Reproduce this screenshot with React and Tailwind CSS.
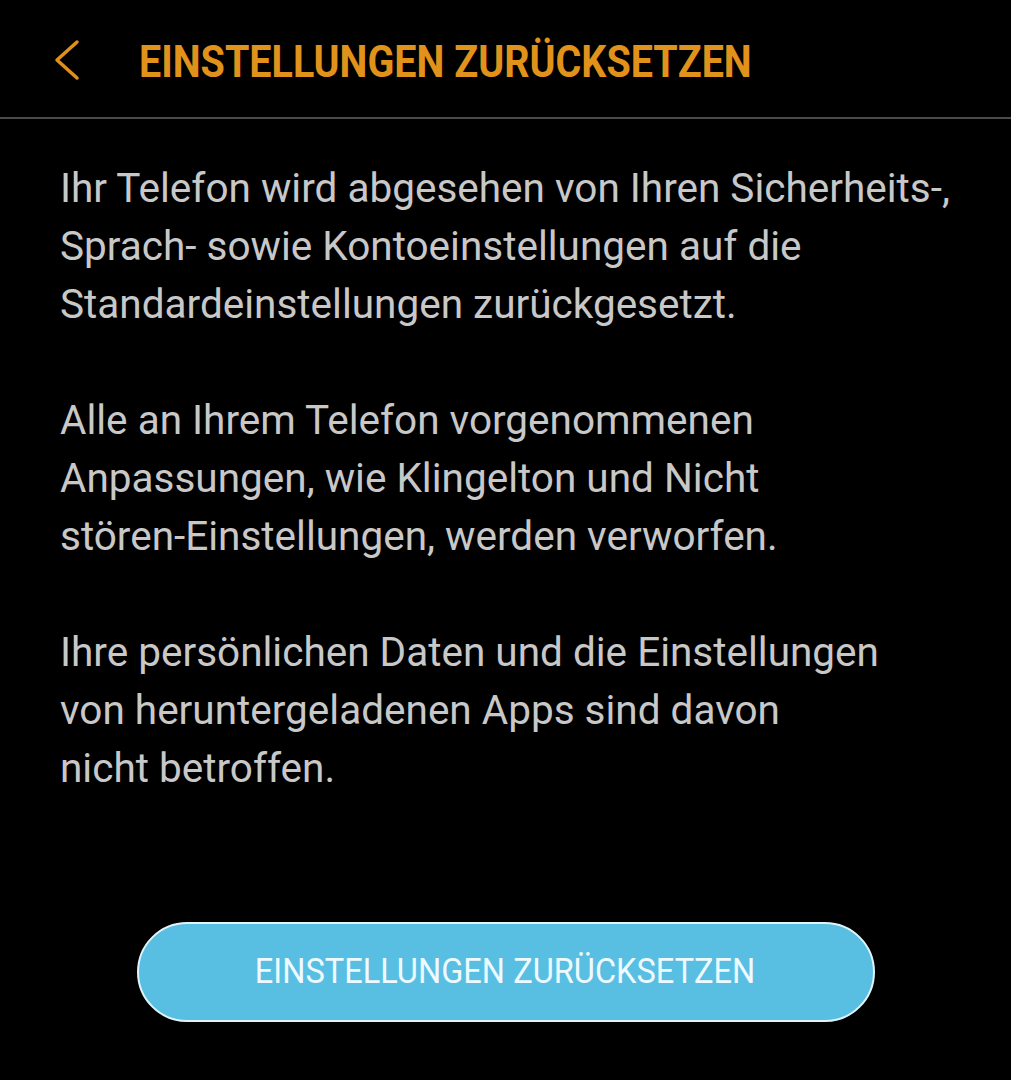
export default function App() {
  return (
    <div className="w-[1011px] h-[1080px] bg-black flex flex-col overflow-hidden" style={{ fontFamily: "Roboto, 'Noto Sans', sans-serif" }}>
      <div className="h-[117px] flex items-center shrink-0">
        <div className="w-[139px] flex items-center pl-[52px] pt-[2px]">
          <svg width="28" height="42" viewBox="0 0 28 42" fill="none">
            <path d="M25 3 L5 21 L25 39" stroke="#e0901a" strokeWidth="3.5" strokeLinecap="round" strokeLinejoin="round" />
          </svg>
        </div>
        <div className="text-[45px] font-bold text-[#e0921b] leading-none whitespace-nowrap origin-left scale-x-[0.877] pt-[6px]">
          EINSTELLUNGEN ZURÜCKSETZEN
        </div>
      </div>
      <div className="h-[2px] bg-[#4a4a4a] shrink-0" />
      <div className="pl-[60px] pt-[40px] text-[40.5px] leading-[58px] text-[#c8c8c8] whitespace-nowrap">
        <p>Ihr Telefon wird abgesehen von Ihren Sicherheits-,<br />Sprach- sowie Kontoeinstellungen auf die<br />Standardeinstellungen zurückgesetzt.</p>
        <p className="mt-[58px]">Alle an Ihrem Telefon vorgenommenen<br />Anpassungen, wie Klingelton und Nicht<br />stören-Einstellungen, werden verworfen.</p>
        <p className="mt-[58px]">Ihre persönlichen Daten und die Einstellungen<br />von heruntergeladenen Apps sind davon<br />nicht betroffen.</p>
      </div>
      <div className="flex justify-center mt-auto mb-[58px]">
        <div className="w-[738px] h-[100px] rounded-full border-2 border-[#dff3fa] bg-[#58bfe3] flex items-center justify-center">
          <span className="text-[35px] text-[#eefaff] whitespace-nowrap scale-x-[0.93]">EINSTELLUNGEN ZURÜCKSETZEN</span>
        </div>
      </div>
    </div>
  );
}
